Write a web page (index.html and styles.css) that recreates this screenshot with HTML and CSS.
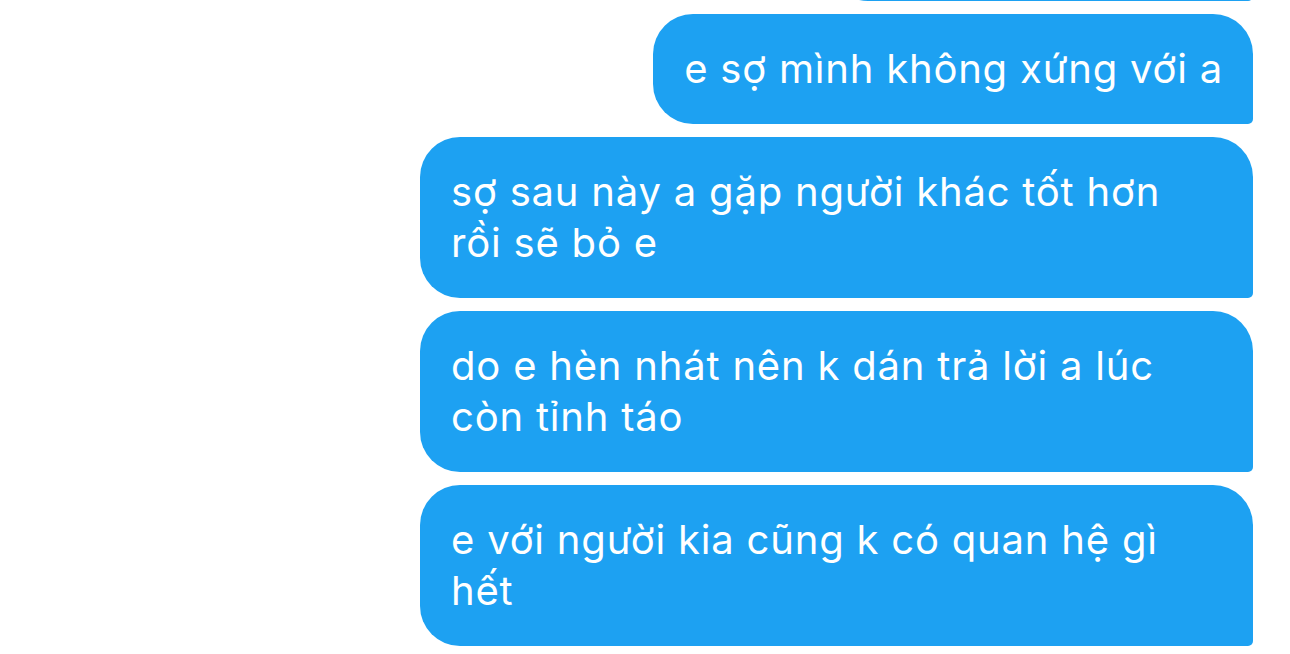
FILE: index.html
```html
<!DOCTYPE html>
<html lang="vi">

<head>
  <meta charset="UTF-8">
  <meta name="viewport" content="width=device-width, initial-scale=1.0">
  <title>Tin nhắn</title>
  <link rel="stylesheet" href="styles.css">
</head>

<body>
  <div class="thread">
    <div class="bubble bubble-cut"></div>
    <div class="bubble">e sợ mình không xứng với a</div>
    <div class="bubble bubble-wide">sợ sau này a gặp người khác tốt hơn rồi sẽ bỏ e</div>
    <div class="bubble bubble-wide">do e hèn nhát nên k dán trả lời a lúc còn tỉnh táo</div>
    <div class="bubble bubble-wide">e với người kia cũng k có quan hệ gì hết</div>
  </div>
</body>

</html>
```

FILE: styles.css
```css
* {
  padding: 0;
  margin: 0;
  box-sizing: border-box;
}

body {
  background-color: #fff;
  font-family: Inter, "Noto Sans", sans-serif;
  overflow: hidden;
}

.thread {
  display: flex;
  flex-direction: column;
  align-items: flex-end;
  gap: 13px;
  padding-right: 37px;
}

.bubble {
  max-width: 833px;
  padding: 29px 30px 30px 31px;
  font-size: 40px;
  line-height: 51px;
  letter-spacing: 0.8px;
  color: #fff;
  background-color: #1da1f2;
  border-radius: 40px 40px 5px 40px;
}

/* long messages wrap a little earlier than the bubble edge */
.bubble-wide {
  width: 833px;
  padding-right: 45px;
}

.bubble-cut {
  width: 425px;
  height: 110px;
  margin-top: -109px;
}
```
